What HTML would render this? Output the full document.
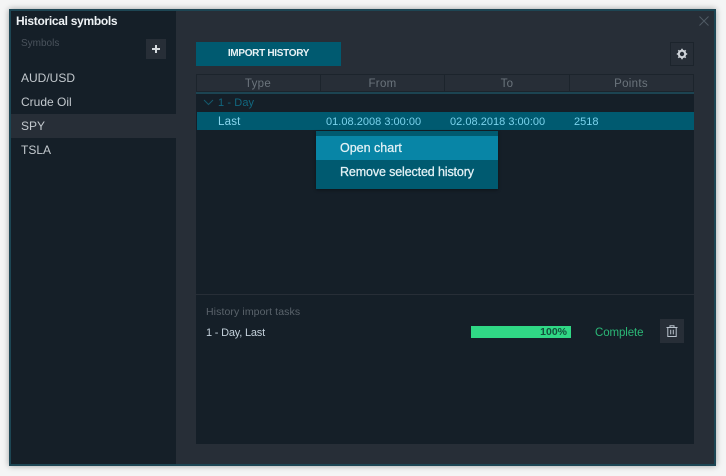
<!DOCTYPE html>
<html><head><meta charset="utf-8">
<style>
html,body{margin:0;padding:0;width:726px;height:476px;overflow:hidden;background:#f4f5f5}
*{box-sizing:border-box}
body{font-family:"Liberation Sans",sans-serif;font-size:12px;position:relative}
.a{position:absolute;white-space:nowrap}
.t{line-height:18px;height:18px}
</style></head><body>
<div class="a" style="left:9px;top:9px;width:707px;height:457px;background:#272e37;border:2px solid #1d4654;box-shadow:0 0 6px rgba(0,0,0,.35)"></div>
<div class="a" style="left:11px;top:11px;width:165px;height:453px;background:#151f28"></div>

<div class="a t" style="left:16px;top:12px;font-size:12px;font-weight:bold;color:#eef2f5;letter-spacing:-.3px">Historical symbols</div>
<div class="a t" style="left:21px;top:35px;font-size:10px;color:#4a535c">Symbols</div>
<div class="a" style="left:146px;top:39px;width:20px;height:20px;background:#272e37"></div>
<svg class="a" style="left:146px;top:39px" width="20" height="20"><path d="M10 6v8M6 10h8" stroke="#d5dade" stroke-width="2"/></svg>

<div class="a" style="left:11px;top:114px;width:165px;height:24px;background:#272e37"></div>
<div class="a t" style="left:21px;top:69px;font-size:12px;color:#c3c9ce">AUD/USD</div>
<div class="a t" style="left:21px;top:93px;font-size:12px;color:#c3c9ce">Crude Oil</div>
<div class="a t" style="left:21px;top:117px;font-size:12px;color:#c3c9ce">SPY</div>
<div class="a t" style="left:21px;top:141px;font-size:12px;color:#c3c9ce">TSLA</div>

<svg class="a" style="left:699px;top:16px" width="10" height="10"><path d="M.5.5l9 9M9.5.5l-9 9" stroke="#4f5a64" stroke-width="1"/></svg>

<div class="a" style="left:196px;top:42px;width:145px;height:24px;background:#005a70;color:#e8f2f5;font-size:10px;font-weight:bold;text-align:center;line-height:24px;letter-spacing:-.3px">IMPORT HISTORY</div>
<div class="a" style="left:670px;top:42px;width:24px;height:24px;border:1px solid #1c242c"></div>
<svg class="a" style="left:676px;top:48px" width="12" height="12" viewBox="0 0 12 12"><circle cx="6" cy="6" r="3.2" fill="none" stroke="#d0d5da" stroke-width="2"/><path d="M6 .8v2M6 9.2v2M.8 6h2M9.2 6h2M2.3 2.3l1.4 1.4M8.3 8.3l1.4 1.4M9.7 2.3L8.3 3.7M3.7 8.3L2.3 9.7" stroke="#d0d5da" stroke-width="1.6"/></svg>

<div class="a" style="left:196px;top:74px;width:498px;height:370px;background:#151f28"></div>
<div class="a" style="left:196px;top:74px;width:498px;height:18px;background:#272e37;border:1px solid #1c242c"></div>
<div class="a" style="left:320px;top:74px;width:1px;height:18px;background:#1c242c"></div>
<div class="a" style="left:444px;top:74px;width:1px;height:18px;background:#1c242c"></div>
<div class="a" style="left:569px;top:74px;width:1px;height:18px;background:#1c242c"></div>
<div class="a" style="left:196px;top:92px;width:498px;height:2px;background:#1c4452"></div>
<div class="a t" style="left:196px;top:75px;width:124px;text-align:center;font-size:11.5px;color:#6b747c;letter-spacing:.3px">Type</div>
<div class="a t" style="left:321px;top:75px;width:123px;text-align:center;font-size:11.5px;color:#6b747c;letter-spacing:.3px">From</div>
<div class="a t" style="left:445px;top:75px;width:124px;text-align:center;font-size:11.5px;color:#6b747c;letter-spacing:.3px">To</div>
<div class="a t" style="left:569px;top:75px;width:124px;text-align:center;font-size:11.5px;color:#6b747c;letter-spacing:.3px">Points</div>

<svg class="a" style="left:203px;top:99px" width="11" height="7"><path d="M1 1l4.5 4.5L10 1" fill="none" stroke="#14586c" stroke-width="1"/></svg>
<div class="a t" style="left:218px;top:94px;font-size:11px;color:#11677f;letter-spacing:.1px">1 - Day</div>

<div class="a" style="left:197px;top:112px;width:497px;height:18px;background:#005a70"></div>
<div class="a t" style="left:218px;top:113px;font-size:11.5px;color:#8ad6ee;letter-spacing:.2px">Last</div>
<div class="a t" style="left:326px;top:113px;font-size:11px;color:#7ad2ec;letter-spacing:.02px">01.08.2008 3:00:00</div>
<div class="a t" style="left:450px;top:113px;font-size:11px;color:#7ad2ec;letter-spacing:.02px">02.08.2018 3:00:00</div>
<div class="a t" style="left:574px;top:113px;font-size:11px;color:#7ad2ec">2518</div>

<div class="a" style="left:316px;top:131px;width:182px;height:58px;background:#005a70;box-shadow:0 1px 3px rgba(0,0,0,.4)"></div>
<div class="a" style="left:316px;top:136px;width:182px;height:24px;background:#0885a6"></div>
<div class="a t" style="left:340px;top:139px;font-size:12.5px;color:#e4f2f6;-webkit-text-stroke:.25px #e4f2f6">Open chart</div>
<div class="a t" style="left:340px;top:163px;font-size:12.5px;color:#e4f2f6;letter-spacing:-.13px;-webkit-text-stroke:.25px #e4f2f6">Remove selected history</div>

<div class="a" style="left:196px;top:294px;width:498px;height:1px;background:#272e37"></div>
<div class="a t" style="left:206px;top:303px;font-size:10.5px;color:#5a636b;letter-spacing:.1px">History import tasks</div>
<div class="a t" style="left:206px;top:324px;font-size:11px;color:#c3d0da;letter-spacing:-.2px">1 - Day, Last</div>
<div class="a" style="left:471px;top:326px;width:100px;height:12px;background:#30d885"></div>
<div class="a" style="left:471px;top:326px;width:96px;height:12px;text-align:right;font-size:10.5px;line-height:12px;color:#14503c;font-weight:bold">100%</div>
<div class="a t" style="left:595px;top:324px;font-size:11.5px;color:#2bb877;letter-spacing:-.1px">Complete</div>
<div class="a" style="left:660px;top:319px;width:24px;height:24px;background:#272e37"></div>
<svg class="a" style="left:666px;top:325px" width="12" height="12" viewBox="0 0 12 12"><path d="M.5 2.5h11M4 2.5V.7h4v1.8M1.8 2.5v9h8.4v-9M4.7 4.8v4.6M7.3 4.8v4.6" fill="none" stroke="#b9c2cc" stroke-width="1"/></svg>
</body></html>
